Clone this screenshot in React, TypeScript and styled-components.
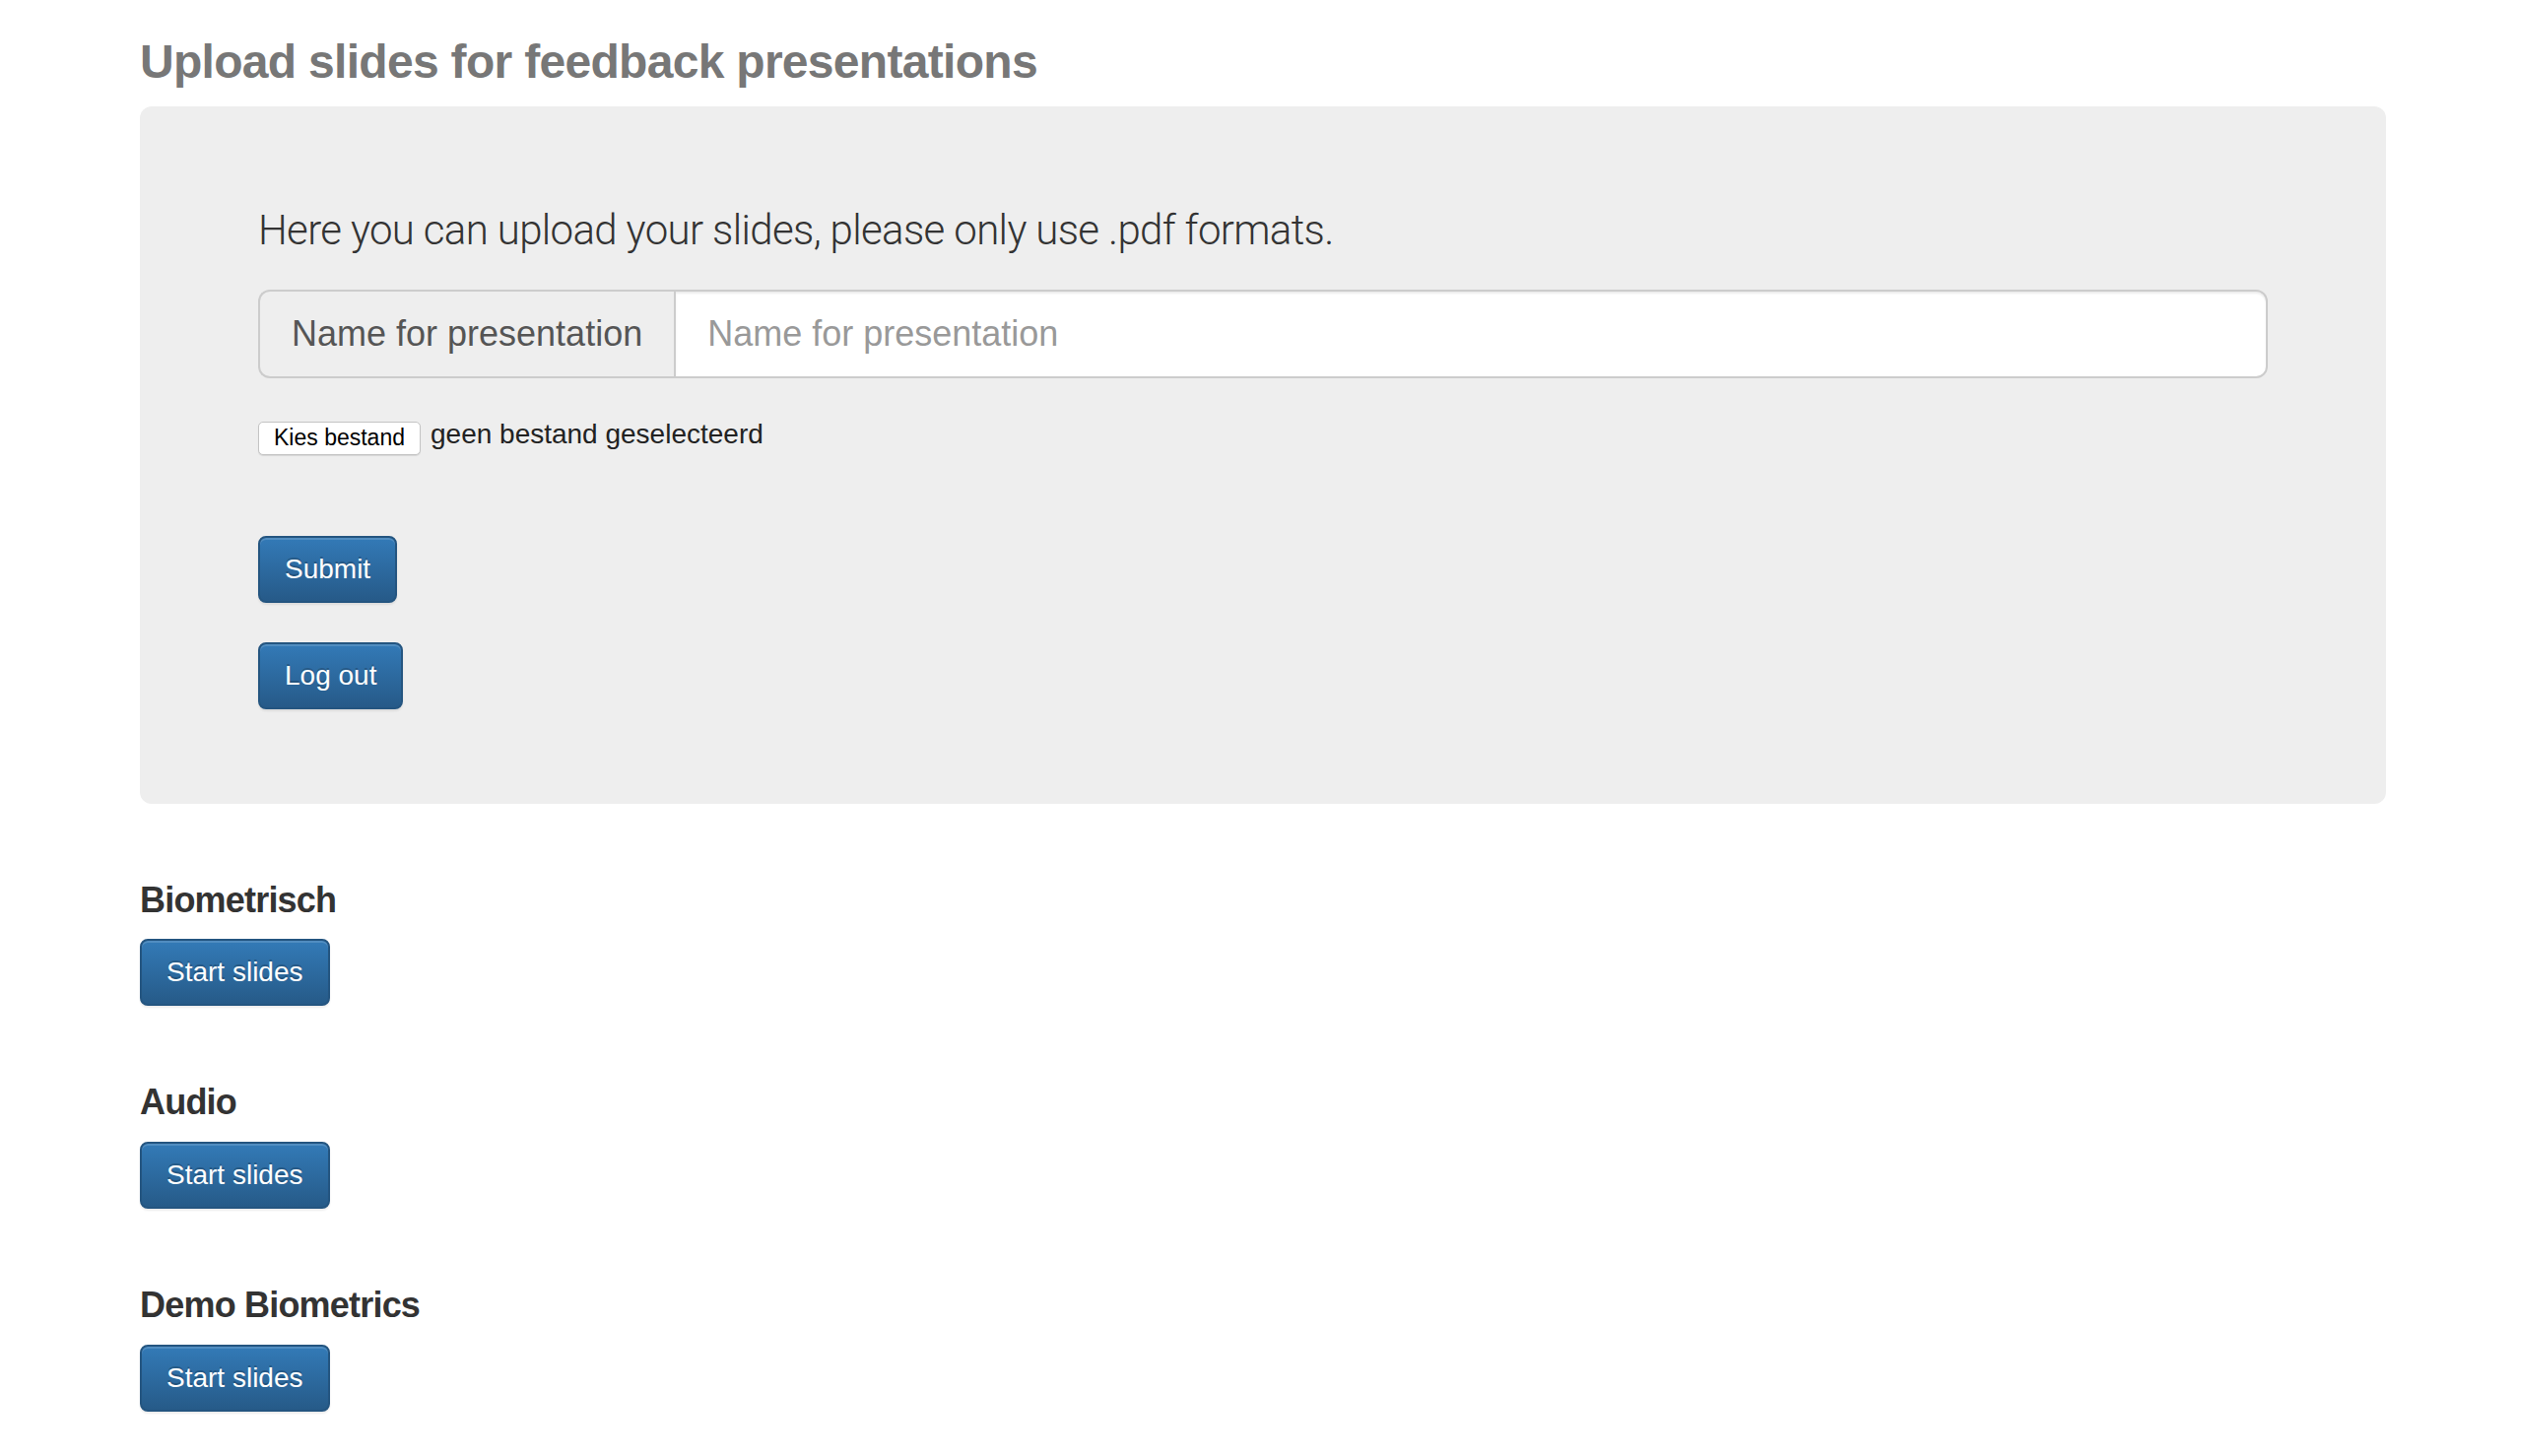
import { FC } from "react";
import styled, { createGlobalStyle } from "styled-components";

const GlobalStyle = createGlobalStyle`
  * {
    box-sizing: border-box;
  }
  body {
    margin: 0;
    background: #fff;
    color: #333;
    font-family: "Liberation Sans", Arial, sans-serif;
    font-size: 28px;
    line-height: 1.42857;
  }
`;

const Container = styled.div`
  width: 2280px;
  margin-left: 142px;
  padding-bottom: 40px;
`;

const PageTitle = styled.h3`
  margin: 37px 0 18px;
  font-size: 48px;
  font-weight: 700;
  letter-spacing: -0.7px;
  line-height: 1.1;
  color: #777;
`;

const Jumbotron = styled.div`
  padding: 96px 120px;
  background: #eee;
  border-radius: 12px;
`;

const Lead = styled.p`
  margin: 0 0 30px;
  font-family: Roboto, "Liberation Sans", sans-serif;
  font-weight: 300;
  font-size: 42px;
  letter-spacing: -0.65px;
  line-height: 60px;
  color: #333;
`;

const InputGroup = styled.div`
  display: flex;
  height: 90px;
  margin-bottom: 44px;
`;

const Addon = styled.span`
  display: flex;
  align-items: center;
  padding: 0 32px;
  font-size: 36px;
  color: #555;
  background: #eee;
  border: 2px solid #ccc;
  border-right: 0;
  border-radius: 12px 0 0 12px;
  white-space: nowrap;
`;

const TextInput = styled.input`
  flex: 1;
  min-width: 0;
  padding: 0 32px;
  font-family: inherit;
  font-size: 36px;
  color: #555;
  background: #fff;
  border: 2px solid #ccc;
  border-radius: 0 12px 12px 0;
  box-shadow: inset 0 2px 2px rgba(0, 0, 0, 0.075);
  outline: none;
  &::placeholder {
    color: #999;
  }
`;

const FileRow = styled.div`
  display: flex;
  align-items: center;
  gap: 10px;
  height: 34px;
`;

const FileButton = styled.button`
  height: 34px;
  padding: 0 15px;
  font-family: "Liberation Sans", Arial, sans-serif;
  font-size: 23px;
  color: #000;
  background: #fff;
  border: 1px solid #c4c4c4;
  border-radius: 5px;
  box-shadow: 0 1px 1px rgba(0, 0, 0, 0.1);
`;

const FileName = styled.span`
  font-size: 28px;
  line-height: 34px;
  margin-top: -8px;
  color: #222;
`;

const PrimaryButton = styled.button<{ $top?: number }>`
  display: block;
  height: 68px;
  margin-top: ${(p) => p.$top ?? 0}px;
  padding: 0 25px;
  font-family: inherit;
  font-size: 28px;
  color: #fff;
  background-color: #265a88;
  background-image: linear-gradient(to bottom, #337ab7 0, #265a88 100%);
  border: 2px solid #245580;
  border-radius: 8px;
  text-shadow: 0 -2px 0 rgba(0, 0, 0, 0.2);
  box-shadow: inset 0 2px 0 rgba(255, 255, 255, 0.15),
    0 2px 2px rgba(0, 0, 0, 0.075);
  cursor: pointer;
`;

const SectionList = styled.div`
  display: flex;
  flex-direction: column;
  gap: 78px;
  margin-top: 78px;
`;

const Section = styled.section`
  display: flex;
  flex-direction: column;
  align-items: flex-start;
`;

const SectionTitle = styled.h4`
  margin: 0 0 20px;
  font-size: 36px;
  font-weight: 700;
  letter-spacing: -0.8px;
  line-height: 1.1;
  color: #333;
`;

const presentations = ["Biometrisch", "Audio", "Demo Biometrics"];

const App: FC = () => {
  return (
    <>
      <GlobalStyle />
      <Container>
        <PageTitle>Upload slides for feedback presentations</PageTitle>
        <Jumbotron>
          <Lead>Here you can upload your slides, please only use .pdf formats.</Lead>
          <InputGroup>
            <Addon>Name for presentation</Addon>
            <TextInput placeholder="Name for presentation" />
          </InputGroup>
          <FileRow>
            <FileButton>Kies bestand</FileButton>
            <FileName>geen bestand geselecteerd</FileName>
          </FileRow>
          <PrimaryButton $top={82}>Submit</PrimaryButton>
          <PrimaryButton $top={40}>Log out</PrimaryButton>
        </Jumbotron>
        <SectionList>
          {presentations.map((name) => (
            <Section key={name}>
              <SectionTitle>{name}</SectionTitle>
              <PrimaryButton>Start slides</PrimaryButton>
            </Section>
          ))}
        </SectionList>
      </Container>
    </>
  );
};

export default App;
